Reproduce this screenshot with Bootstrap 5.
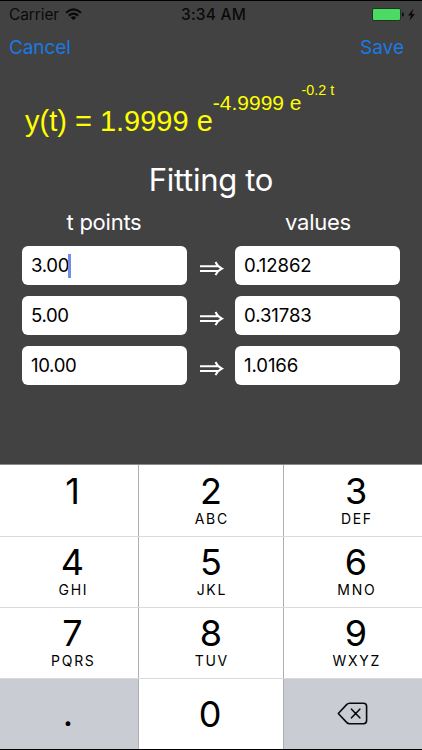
<!DOCTYPE html>
<html lang="en">
<head>
<meta charset="utf-8">
<meta name="viewport" content="width=device-width, initial-scale=1">
<title>Fitting</title>
<link href="https://cdn.jsdelivr.net/npm/bootstrap@5.3.0/dist/css/bootstrap.min.css" rel="stylesheet">
<style>
body{background:#424242;font-family:Inter,"Liberation Sans",sans-serif;line-height:1;white-space:nowrap}
.screen{height:750px;border-top:1px solid #000;border-bottom:1px solid #000}
.status{height:27px;padding:0 6px 0 9px;color:#0a0a0a;font-size:15.5px}
.side{width:140px}
.carrier{letter-spacing:-.1px}
.wifi{margin-left:6px}
.clock{font-weight:500;letter-spacing:.2px;padding-left:2px}
.actions{height:38px;padding:0 18px 0 9px;font-size:19px}
.actions a{color:#1b79e2}
.cancel{letter-spacing:-.1px}
.formula{height:84px;padding:13px 0 0 25px;color:#ff0;font:29px/84px "Liberation Sans",Arial,sans-serif}
.formula .up1{font-size:21px;vertical-align:21.5px;line-height:0}
.formula .up2{font-size:14.3px;vertical-align:15px;line-height:0}
.heading{height:60px;font-size:31px;letter-spacing:-.3px}
.labels{padding:0 22px;height:36px;font-size:22px;letter-spacing:-.25px}
.half{width:164px;padding-top:1px}
.fields{padding:0 22px;gap:11px}
.fields .form-control{width:165px;height:39px;border:0;border-radius:6px;padding:0 9px;font-size:18.6px;line-height:39px;color:#000;letter-spacing:-.1px}
.fields .form-control:first-child{letter-spacing:-.35px}
.caret{width:2.5px;height:24px;background:#748de8;margin-left:-1px;flex:none}
.keypad{display:grid;grid-template-columns:138px 144px 138px;grid-template-rows:71px 70px 70px 70px;gap:1px;background:#d9d9da;margin-top:auto;border-top:1px solid #8b8b8b}
.key{background:#fff;color:#000;box-shadow:1px 0 #aeaeb0;padding-top:6px}
.key:nth-child(-n+3){padding-top:7px}
.key b{font-weight:400;font-size:36px;line-height:38px;height:38px}
.key i{font-style:normal;font-size:14px;line-height:18px;letter-spacing:1.7px;margin-right:-1.7px}
.key:nth-child(3n+1){padding-left:7px}
.key:nth-child(3n){padding-left:6px}
.key.alt{background:#caccd3;padding:0 2px 2px 0}
.key.zero{padding:0 2px 0 0}
</style>
<script src="https://cdn.jsdelivr.net/npm/bootstrap@5.3.0/dist/js/bootstrap.bundle.min.js"></script>
</head>
<body>
<main class="screen d-flex flex-column overflow-hidden">
  <div class="status d-flex align-items-center justify-content-between">
    <div class="side d-flex align-items-center"><span class="carrier">Carrier</span>
      <svg class="wifi" width="17" height="13" viewBox="0 0 17 13"><g fill="none" stroke="#0a0a0a" stroke-width="2.1"><path d="M1 4.7Q8.5-1.8 16 4.7"/><path d="M3.8 7.6Q8.5 3.5 13.2 7.6"/></g><path d="M5.7 9.5Q8.5 7.2 11.3 9.5L8.5 12.3Z" fill="#0a0a0a"/></svg></div>
    <span class="clock">3:34 AM</span>
    <div class="side d-flex align-items-center justify-content-end">
      <svg width="44" height="14" viewBox="0 0 44 14"><rect x=".5" y=".5" width="28" height="12" rx="1.5" fill="#4cd964" stroke="#173c1d"/><path d="M30 4.2Q32 4.7 32 6.5Q32 8.3 30 8.8Z" fill="#0a0a0a"/><path d="M41.3 .8L36 7.4H38.9L37.5 12.8L43 5.9H39.9Z" fill="#0a0a0a"/></svg></div>
  </div>
  <nav class="actions d-flex align-items-center justify-content-between">
    <a class="cancel text-decoration-none" href="#">Cancel</a><a class="save text-decoration-none" href="#">Save</a>
  </nav>
  <div class="formula">y(t) = 1.9999 e<span class="up1">-4.9999 e<span class="up2">-0.2 t</span></span></div>
  <h1 class="heading d-flex align-items-center justify-content-center text-white fw-normal m-0">Fitting to</h1>
  <div class="labels d-flex justify-content-between text-white"><div class="half text-center">t points</div><div class="half text-center">values</div></div>
  <div class="fields d-flex flex-column">
    <div class="d-flex justify-content-between align-items-center"><div class="form-control d-flex align-items-center"><span>3.00</span><span class="caret"></span></div><svg width="26" height="20" viewBox="0 0 26 20"><path d="M2 10.2H20.5M2 15H20.5M17.5 6Q19.5 10.6 24 12.6Q19.5 14.6 17.5 19.2" fill="none" stroke="#fff" stroke-width="1.9"/></svg><div class="form-control">0.12862</div></div>
    <div class="d-flex justify-content-between align-items-center"><div class="form-control">5.00</div><svg width="26" height="20" viewBox="0 0 26 20"><path d="M2 10.2H20.5M2 15H20.5M17.5 6Q19.5 10.6 24 12.6Q19.5 14.6 17.5 19.2" fill="none" stroke="#fff" stroke-width="1.9"/></svg><div class="form-control">0.31783</div></div>
    <div class="d-flex justify-content-between align-items-center"><div class="form-control">10.00</div><svg width="26" height="20" viewBox="0 0 26 20"><path d="M2 10.2H20.5M2 15H20.5M17.5 6Q19.5 10.6 24 12.6Q19.5 14.6 17.5 19.2" fill="none" stroke="#fff" stroke-width="1.9"/></svg><div class="form-control">1.0166</div></div>
  </div>
  <div class="keypad">
    <div class="key d-flex flex-column align-items-center"><b>1</b></div>
    <div class="key d-flex flex-column align-items-center"><b>2</b><i>ABC</i></div>
    <div class="key d-flex flex-column align-items-center"><b>3</b><i>DEF</i></div>
    <div class="key d-flex flex-column align-items-center"><b>4</b><i>GHI</i></div>
    <div class="key d-flex flex-column align-items-center"><b>5</b><i>JKL</i></div>
    <div class="key d-flex flex-column align-items-center"><b>6</b><i>MNO</i></div>
    <div class="key d-flex flex-column align-items-center"><b>7</b><i>PQRS</i></div>
    <div class="key d-flex flex-column align-items-center"><b>8</b><i>TUV</i></div>
    <div class="key d-flex flex-column align-items-center"><b>9</b><i>WXYZ</i></div>
    <div class="key alt d-flex align-items-center justify-content-center"><b>.</b></div>
    <div class="key zero d-flex align-items-center justify-content-center"><b>0</b></div>
    <div class="key alt d-flex align-items-center justify-content-center"><svg width="31" height="23" viewBox="0 0 31 23" fill="none" stroke="#0a0a0a" stroke-width="1.6" stroke-linecap="round" stroke-linejoin="round"><path d="M1.3 11.5L9.6 2.6Q10.8 1.3 12.5 1.3H26.5Q29.6 1.3 29.6 4.4V18.6Q29.6 21.7 26.5 21.7H12.5Q10.8 21.7 9.6 20.4ZM14.5 7.2L22.8 15.8M22.8 7.2L14.5 15.8"/></svg></div>
  </div>
</main>
</body>
</html>
